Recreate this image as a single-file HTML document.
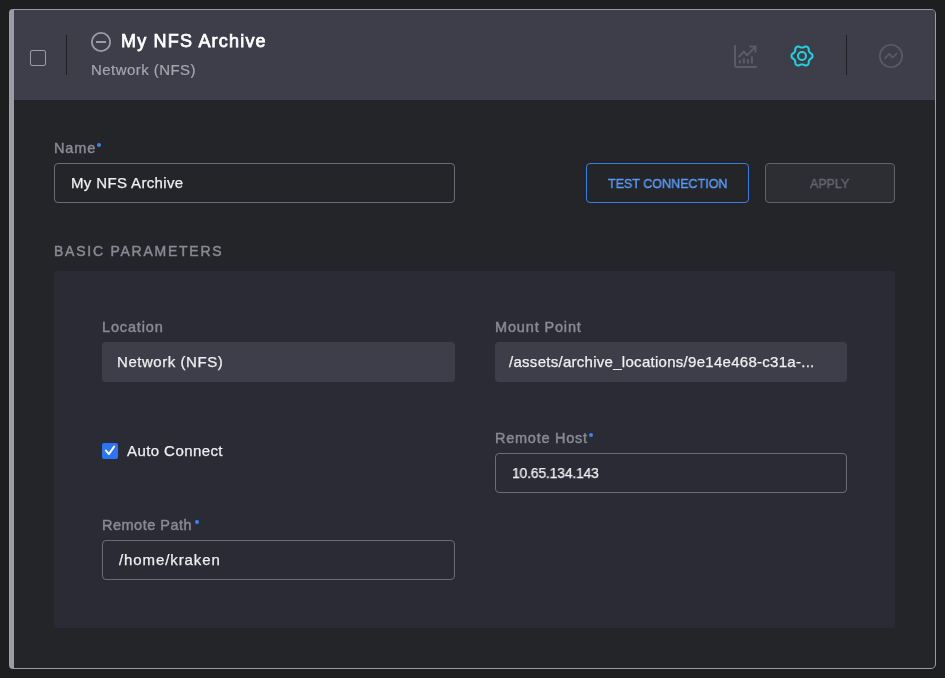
<!DOCTYPE html>
<html><head><meta charset="utf-8">
<style>
*{margin:0;padding:0;box-sizing:border-box}
html,body{width:945px;height:678px;overflow:hidden;background:#1d1e20;font-family:"Liberation Sans",sans-serif}
.t{will-change:transform}
.a{position:absolute}
.t{position:absolute;line-height:1;white-space:nowrap}
#card{left:9px;top:9px;width:927px;height:660px;border:1px solid #9c9ba6;border-left:5px solid #9c9ba6;border-radius:4px 5px 5px 4px;background:#242529;overflow:hidden}
#hdr{left:14px;top:10px;width:921px;height:90px;background:#3e3d4a;border-top-right-radius:4px}
.lbl{font-weight:normal;font-size:14.5px;letter-spacing:0.85px;color:#8a8a94;-webkit-text-stroke:0.45px #8a8a94}
.val{font-size:15px;letter-spacing:0.42px;color:#f0f0f2;-webkit-text-stroke:0.25px #f0f0f2}
.dot{position:absolute;width:4px;height:4px;border-radius:50%;background:#3b82f6}
.inp{position:absolute;border:1px solid #6c6b78;border-radius:4px}
.ro{position:absolute;background:#3e3e4a;border-radius:4px}
</style></head><body>
<div id="card" class="a"></div>
<div id="hdr" class="a"></div>
<!-- header -->
<div class="a" style="left:30px;top:50px;width:16px;height:16px;border:1.5px solid #9d9daa;border-radius:2px"></div>
<div class="a" style="left:66px;top:35px;width:1px;height:40px;background:#1e1f25"></div>
<svg class="a" style="left:90px;top:31px" width="22" height="22" viewBox="0 0 22 22"><circle cx="11" cy="11" r="9.15" fill="none" stroke="#9d9daa" stroke-width="1.8"/><line x1="6" y1="11" x2="16" y2="11" stroke="#9d9daa" stroke-width="2"/></svg>
<div class="t" style="left:121px;top:31.5px;font-size:18px;letter-spacing:1.2px;color:#fff;-webkit-text-stroke:0.75px #fff">My NFS Archive</div>
<div class="t" style="left:91px;top:62.3px;font-size:15px;letter-spacing:0.45px;color:#a6a6b0;-webkit-text-stroke:0.2px #a6a6b0">Network (NFS)</div>
<svg class="a" style="left:730px;top:40px" width="32" height="32" viewBox="0 0 32 32" fill="none" stroke="#5b5b68" stroke-width="2"><path d="M5 5.2V24.9a2 2 0 0 0 2 2H26.7"/><path d="M8.7 17.2L13.9 11.6L17 15.3L25.2 7.1" stroke-linejoin="round"/><path d="M19.3 6.6H25.5V12.5"/><path d="M9.9 23.6V20.3M13.9 23.6V18.2M17.9 23.6V19.1M21.9 23.6V16.3"/></svg>
<svg class="a" style="left:788px;top:42px" width="28" height="28" viewBox="-14 -14 28 28"><path fill="none" stroke="#22d3dd" stroke-width="2" stroke-linejoin="round" d="M10.50 0.00 L10.49 0.18 L10.48 0.37 L10.45 0.55 L10.41 0.73 L10.37 0.91 L10.31 1.08 L10.24 1.26 L10.16 1.43 L10.07 1.59 L9.97 1.76 L9.85 1.91 L9.72 2.07 L9.58 2.21 L9.40 2.34 L9.13 2.45 L8.85 2.54 L8.68 2.65 L8.52 2.77 L8.38 2.89 L8.25 3.00 L8.13 3.12 L8.01 3.24 L7.90 3.35 L7.80 3.47 L7.70 3.59 L7.60 3.71 L7.51 3.83 L7.43 3.95 L7.35 4.07 L7.27 4.20 L7.20 4.33 L7.14 4.46 L7.07 4.59 L7.01 4.73 L6.96 4.87 L6.91 5.02 L6.86 5.17 L6.81 5.32 L6.77 5.48 L6.73 5.64 L6.69 5.82 L6.66 6.00 L6.63 6.19 L6.62 6.40 L6.68 6.68 L6.73 6.97 L6.70 7.19 L6.65 7.39 L6.58 7.57 L6.50 7.75 L6.41 7.92 L6.32 8.08 L6.21 8.24 L6.09 8.39 L5.97 8.52 L5.84 8.66 L5.70 8.78 L5.56 8.89 L5.41 9.00 L5.25 9.09 L5.09 9.18 L4.92 9.26 L4.75 9.33 L4.58 9.38 L4.40 9.43 L4.22 9.47 L4.03 9.50 L3.84 9.51 L3.65 9.52 L3.46 9.51 L3.27 9.49 L3.07 9.45 L2.87 9.40 L2.67 9.32 L2.45 9.13 L2.23 8.93 L2.04 8.84 L1.86 8.76 L1.69 8.70 L1.52 8.65 L1.36 8.60 L1.20 8.56 L1.05 8.52 L0.89 8.49 L0.74 8.46 L0.59 8.44 L0.44 8.42 L0.29 8.41 L0.15 8.40 L0.00 8.40 L-0.15 8.40 L-0.29 8.41 L-0.44 8.42 L-0.59 8.44 L-0.74 8.46 L-0.89 8.49 L-1.05 8.52 L-1.20 8.56 L-1.36 8.60 L-1.52 8.65 L-1.69 8.70 L-1.86 8.76 L-2.04 8.84 L-2.23 8.93 L-2.45 9.13 L-2.67 9.32 L-2.87 9.40 L-3.07 9.45 L-3.27 9.49 L-3.46 9.51 L-3.65 9.52 L-3.84 9.51 L-4.03 9.50 L-4.22 9.47 L-4.40 9.43 L-4.58 9.38 L-4.75 9.33 L-4.92 9.26 L-5.09 9.18 L-5.25 9.09 L-5.41 9.00 L-5.56 8.89 L-5.70 8.78 L-5.84 8.66 L-5.97 8.52 L-6.09 8.39 L-6.21 8.24 L-6.32 8.08 L-6.41 7.92 L-6.50 7.75 L-6.58 7.57 L-6.65 7.39 L-6.70 7.19 L-6.73 6.97 L-6.68 6.68 L-6.62 6.40 L-6.63 6.19 L-6.66 6.00 L-6.69 5.82 L-6.73 5.64 L-6.77 5.48 L-6.81 5.32 L-6.86 5.17 L-6.91 5.02 L-6.96 4.87 L-7.01 4.73 L-7.07 4.59 L-7.14 4.46 L-7.20 4.33 L-7.27 4.20 L-7.35 4.07 L-7.43 3.95 L-7.51 3.83 L-7.60 3.71 L-7.70 3.59 L-7.80 3.47 L-7.90 3.35 L-8.01 3.24 L-8.13 3.12 L-8.25 3.00 L-8.38 2.89 L-8.52 2.77 L-8.68 2.65 L-8.85 2.54 L-9.13 2.45 L-9.40 2.34 L-9.58 2.21 L-9.72 2.07 L-9.85 1.91 L-9.97 1.76 L-10.07 1.59 L-10.16 1.43 L-10.24 1.26 L-10.31 1.08 L-10.37 0.91 L-10.41 0.73 L-10.45 0.55 L-10.48 0.37 L-10.49 0.18 L-10.50 0.00 L-10.49 -0.18 L-10.48 -0.37 L-10.45 -0.55 L-10.41 -0.73 L-10.37 -0.91 L-10.31 -1.08 L-10.24 -1.26 L-10.16 -1.43 L-10.07 -1.59 L-9.97 -1.76 L-9.85 -1.91 L-9.72 -2.07 L-9.58 -2.21 L-9.40 -2.34 L-9.13 -2.45 L-8.85 -2.54 L-8.68 -2.65 L-8.52 -2.77 L-8.38 -2.89 L-8.25 -3.00 L-8.13 -3.12 L-8.01 -3.24 L-7.90 -3.35 L-7.80 -3.47 L-7.70 -3.59 L-7.60 -3.71 L-7.51 -3.83 L-7.43 -3.95 L-7.35 -4.07 L-7.27 -4.20 L-7.20 -4.33 L-7.14 -4.46 L-7.07 -4.59 L-7.01 -4.73 L-6.96 -4.87 L-6.91 -5.02 L-6.86 -5.17 L-6.81 -5.32 L-6.77 -5.48 L-6.73 -5.64 L-6.69 -5.82 L-6.66 -6.00 L-6.63 -6.19 L-6.62 -6.40 L-6.68 -6.68 L-6.73 -6.97 L-6.70 -7.19 L-6.65 -7.39 L-6.58 -7.57 L-6.50 -7.75 L-6.41 -7.92 L-6.32 -8.08 L-6.21 -8.24 L-6.09 -8.39 L-5.97 -8.52 L-5.84 -8.66 L-5.70 -8.78 L-5.56 -8.89 L-5.41 -9.00 L-5.25 -9.09 L-5.09 -9.18 L-4.92 -9.26 L-4.75 -9.33 L-4.58 -9.38 L-4.40 -9.43 L-4.22 -9.47 L-4.03 -9.50 L-3.84 -9.51 L-3.65 -9.52 L-3.46 -9.51 L-3.27 -9.49 L-3.07 -9.45 L-2.87 -9.40 L-2.67 -9.32 L-2.45 -9.13 L-2.23 -8.93 L-2.04 -8.84 L-1.86 -8.76 L-1.69 -8.70 L-1.52 -8.65 L-1.36 -8.60 L-1.20 -8.56 L-1.05 -8.52 L-0.89 -8.49 L-0.74 -8.46 L-0.59 -8.44 L-0.44 -8.42 L-0.29 -8.41 L-0.15 -8.40 L-0.00 -8.40 L0.15 -8.40 L0.29 -8.41 L0.44 -8.42 L0.59 -8.44 L0.74 -8.46 L0.89 -8.49 L1.05 -8.52 L1.20 -8.56 L1.36 -8.60 L1.52 -8.65 L1.69 -8.70 L1.86 -8.76 L2.04 -8.84 L2.23 -8.93 L2.45 -9.13 L2.67 -9.32 L2.87 -9.40 L3.07 -9.45 L3.27 -9.49 L3.46 -9.51 L3.65 -9.52 L3.84 -9.51 L4.03 -9.50 L4.22 -9.47 L4.40 -9.43 L4.58 -9.38 L4.75 -9.33 L4.92 -9.26 L5.09 -9.18 L5.25 -9.09 L5.41 -9.00 L5.56 -8.89 L5.70 -8.78 L5.84 -8.66 L5.97 -8.52 L6.09 -8.39 L6.21 -8.24 L6.32 -8.08 L6.41 -7.92 L6.50 -7.75 L6.58 -7.57 L6.65 -7.39 L6.70 -7.19 L6.73 -6.97 L6.68 -6.68 L6.62 -6.40 L6.63 -6.19 L6.66 -6.00 L6.69 -5.82 L6.73 -5.64 L6.77 -5.48 L6.81 -5.32 L6.86 -5.17 L6.91 -5.02 L6.96 -4.87 L7.01 -4.73 L7.07 -4.59 L7.14 -4.46 L7.20 -4.33 L7.27 -4.20 L7.35 -4.07 L7.43 -3.95 L7.51 -3.83 L7.60 -3.71 L7.70 -3.59 L7.80 -3.47 L7.90 -3.35 L8.01 -3.24 L8.13 -3.12 L8.25 -3.00 L8.38 -2.89 L8.52 -2.77 L8.68 -2.65 L8.85 -2.54 L9.13 -2.45 L9.40 -2.34 L9.58 -2.21 L9.72 -2.07 L9.85 -1.91 L9.97 -1.76 L10.07 -1.59 L10.16 -1.43 L10.24 -1.26 L10.31 -1.08 L10.37 -0.91 L10.41 -0.73 L10.45 -0.55 L10.48 -0.37 L10.49 -0.18Z"/><circle cx="0" cy="0" r="4" fill="none" stroke="#22d3dd" stroke-width="2"/></svg>
<div class="a" style="left:846px;top:35px;width:1px;height:40px;background:#1e1f25"></div>
<svg class="a" style="left:877px;top:42px" width="28" height="28" viewBox="0 0 28 28" fill="none" stroke="#5b5b68" stroke-width="1.6" stroke-linecap="round" stroke-linejoin="round"><circle cx="14" cy="14" r="11.2"/><path d="M8.1 16.4L12.4 11.7L15.5 15.7L19.5 11.7"/></svg>
<!-- name row -->
<div class="t lbl" style="left:54px;top:140.5px">Name</div>
<div class="dot" style="left:97px;top:143px"></div>
<div class="inp" style="left:54px;top:163px;width:401px;height:40px"></div>
<div class="t val" style="left:70.5px;top:174.7px;letter-spacing:0.36px">My NFS Archive</div>
<div class="a" style="left:586px;top:163px;width:163px;height:40px;border:1px solid #3b7de0;border-radius:4px"></div>
<div class="t" style="left:608px;top:177.1px;font-size:13.4px;transform:scaleX(0.935);transform-origin:0 0;color:#5a9cf8;-webkit-text-stroke:0.4px #5a9cf8">TEST CONNECTION</div>
<div class="a" style="left:765px;top:163px;width:130px;height:40px;border:1px solid #626269;border-radius:4px;background:#2d2e33"></div>
<div class="t" style="left:810px;top:177.1px;font-size:13.4px;transform:scaleX(0.93);transform-origin:0 0;color:#65656e;-webkit-text-stroke:0.4px #65656e">APPLY</div>
<div class="t lbl" style="left:54px;top:244.0px;font-size:14px;letter-spacing:1.75px">BASIC PARAMETERS</div>
<!-- panel -->
<div class="a" style="left:54px;top:271px;width:841px;height:357px;background:#2b2b35;border-radius:3px"></div>
<div class="t lbl" style="left:102px;top:319.7px">Location</div>
<div class="ro" style="left:102px;top:342px;width:353px;height:40px"></div>
<div class="t val" style="left:117px;top:353.6px;letter-spacing:0.55px">Network (NFS)</div>
<div class="t lbl" style="left:495px;top:319.7px">Mount Point</div>
<div class="ro" style="left:495px;top:342px;width:352px;height:40px"></div>
<div class="t val" style="left:509px;top:353.6px;letter-spacing:0.28px">/assets/archive_locations/9e14e468-c31a-...</div>
<div class="a" style="left:102px;top:443px;width:16px;height:16px;background:#2b74f5;border-radius:2px"></div>
<svg class="a" style="left:102px;top:443px" width="16" height="16" viewBox="0 0 16 16"><path d="M3.8 7.4L6.9 11.1L12.1 3.6" fill="none" stroke="#fff" stroke-width="1.9" stroke-linecap="round" stroke-linejoin="round"/></svg>
<div class="t val" style="left:127px;top:442.9px">Auto Connect</div>
<div class="t lbl" style="left:495px;top:430.6px;letter-spacing:0.75px">Remote Host</div>
<div class="dot" style="left:588.5px;top:433.2px"></div>
<div class="inp" style="left:495px;top:453px;width:352px;height:40px"></div>
<div class="t val" style="left:512px;top:464.5px;letter-spacing:-0.25px;transform:scaleX(0.935);transform-origin:0 0">10.65.134.143</div>
<div class="t lbl" style="left:102px;top:517.7px;letter-spacing:0.5px">Remote Path</div>
<div class="dot" style="left:195px;top:520px"></div>
<div class="inp" style="left:102px;top:540px;width:353px;height:40px"></div>
<div class="t val" style="left:119px;top:552.3px;letter-spacing:0.9px">/home/kraken</div>
</body></html>
